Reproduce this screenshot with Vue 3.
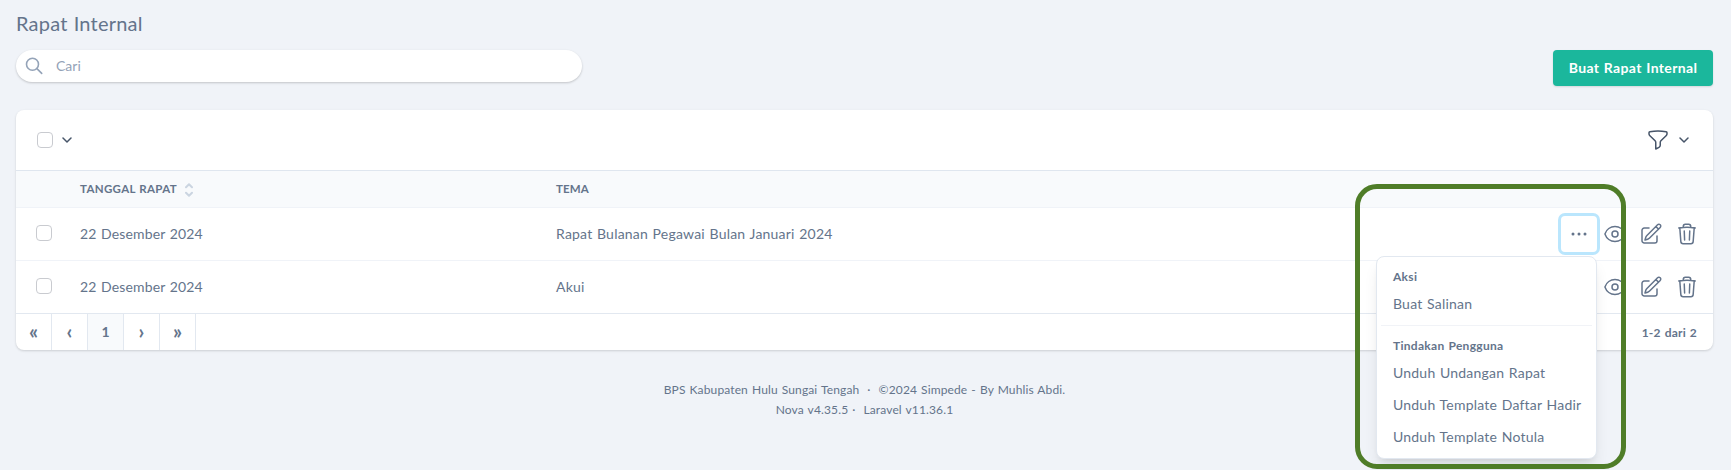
<script setup>
const rows = [
  { id: 1, date: '22 Desember 2024', theme: 'Rapat Bulanan Pegawai Bulan Januari 2024', open: true },
  { id: 2, date: '22 Desember 2024', theme: 'Akui', open: false },
]
const pages = ['«', '‹', '1', '›', '»']
const userActions = ['Unduh Undangan Rapat', 'Unduh Template Daftar Hadir', 'Unduh Template Notula']
</script>

<template>
  <div class="page">
    <h1 class="title">Rapat Internal</h1>

    <div class="topbar">
      <label class="search">
        <svg class="search-icon" width="20" height="20" viewBox="0 0 20 20">
          <circle cx="7.5" cy="8.2" r="6" />
          <path d="M11.9 12.6L16.7 17.4" />
        </svg>
        <span class="placeholder">Cari</span>
      </label>
      <button class="create">Buat Rapat Internal</button>
    </div>

    <section class="card">
      <div class="toolbar">
        <span class="checkbox"></span>
        <svg class="chevron" width="10" height="6" viewBox="0 0 10 6"><path d="M1 1l4 4 4-4" /></svg>
        <svg class="filter" width="24" height="24" viewBox="0 0 24 24">
          <path d="M12 3c2.755 0 5.455.232 8.083.678.533.09.917.556.917 1.096v1.044a2.25 2.25 0 01-.659 1.591l-5.432 5.432a2.25 2.25 0 00-.659 1.591v2.927a2.25 2.25 0 01-1.244 2.013L9.75 21v-6.568a2.25 2.25 0 00-.659-1.591L3.659 7.409A2.25 2.25 0 013 5.818V4.774c0-.54.384-1.006.917-1.096A48.32 48.32 0 0112 3z" />
        </svg>
        <svg class="chevron" width="10" height="6" viewBox="0 0 10 6"><path d="M1 1l4 4 4-4" /></svg>
      </div>

      <div class="row head">
        <span></span>
        <span class="cell sortable">
          <span class="head-date">TANGGAL RAPAT</span>
          <svg width="8" height="14" viewBox="0 0 8 14"><path d="M1 4.2l3-3 3 3M1 9.8l3 3 3-3" /></svg>
        </span>
        <span class="cell">TEMA</span>
      </div>

      <div v-for="row in rows" :key="row.id" class="row">
        <span class="select"><span class="checkbox"></span></span>
        <span class="cell date">{{ row.date }}</span>
        <span class="cell theme">{{ row.theme }}</span>
        <span class="actions">
          <button class="icon-btn" :class="{ focused: row.open }">
            <svg width="24" height="24" viewBox="0 0 24 24" class="dots">
              <circle cx="6" cy="12" r="1.5" /><circle cx="12" cy="12" r="1.5" /><circle cx="18" cy="12" r="1.5" />
            </svg>
          </button>
          <button class="icon-btn">
            <svg width="24" height="24" viewBox="0 0 24 24">
              <path d="M2.036 12.322a1.012 1.012 0 010-.639C3.423 7.51 7.36 4.5 12 4.5c4.638 0 8.573 3.007 9.963 7.178.07.207.07.431 0 .639C20.577 16.49 16.64 19.5 12 19.5c-4.638 0-8.573-3.007-9.963-7.178z" />
              <path d="M15 12a3 3 0 11-6 0 3 3 0 016 0z" />
            </svg>
          </button>
          <button class="icon-btn">
            <svg width="24" height="24" viewBox="0 0 24 24">
              <path d="M16.862 4.487l1.687-1.688a1.875 1.875 0 112.652 2.652L10.582 16.07a4.5 4.5 0 01-1.897 1.13L6 18l.8-2.685a4.5 4.5 0 011.13-1.897l8.932-8.931zm0 0L19.5 7.125M18 14v4.75A2.25 2.25 0 0115.75 21H5.25A2.25 2.25 0 013 18.75V8.25A2.25 2.25 0 015.25 6H10" />
            </svg>
          </button>
          <button class="icon-btn">
            <svg width="24" height="24" viewBox="0 0 24 24">
              <path d="M14.74 9l-.346 9m-4.788 0L9.26 9m9.968-3.21c.342.052.682.107 1.022.166m-1.022-.165L18.16 19.673a2.25 2.25 0 01-2.244 2.077H8.084a2.25 2.25 0 01-2.244-2.077L4.772 5.79m14.456 0a48.108 48.108 0 00-3.478-.397m-12 .562c.34-.059.68-.114 1.022-.165m0 0a48.11 48.11 0 013.478-.397m7.5 0v-.916c0-1.18-.91-2.164-2.09-2.201a51.964 51.964 0 00-3.32 0c-1.18.037-2.09 1.022-2.09 2.201v.916m7.5 0a48.667 48.667 0 00-7.5 0" />
            </svg>
          </button>
        </span>
      </div>

      <div class="pagination">
        <span v-for="p in pages" :key="p" class="page-link" :class="{ current: p === '1' }">{{ p }}</span>
        <span class="count">1-2 dari 2</span>
      </div>
    </section>

    <footer class="footer">
      <div class="line-a">BPS Kabupaten Hulu Sungai Tengah &nbsp;·&nbsp; ©2024 Simpede - By Muhlis Abdi.</div>
      <div class="line-b">Nova v4.35.5 ·&nbsp; Laravel v11.36.1</div>
    </footer>

    <div class="menu">
      <div class="menu-head">Aksi</div>
      <div class="menu-item">Buat Salinan</div>
      <div class="divider"></div>
      <div class="menu-head">Tindakan Pengguna</div>
      <div v-for="a in userActions" :key="a" class="menu-item">{{ a }}</div>
    </div>
    <div class="highlight"></div>
  </div>
</template>

<style>
body {
  background: #f0f3f8;
}
</style>

<style scoped>
.page {
  position: relative;
  box-sizing: border-box;
  width: 100%;
  height: 470px;
  padding: 11px 18px 0 16px;
  overflow: hidden;
  background: #f0f3f8;
  color: #64748b;
  font-family: Lato, "Noto Sans", sans-serif;
  font-size: 14px;
  line-height: 20px;
  letter-spacing: 0.21px;
  word-spacing: 0.8px;
}
.page * {
  box-sizing: border-box;
}
svg {
  display: block;
  flex: none;
  fill: none;
  stroke: currentColor;
  stroke-width: 1.5;
  stroke-linecap: round;
  stroke-linejoin: round;
}
button {
  border: 0;
  padding: 0;
  font: inherit;
  color: inherit;
  background: none;
  letter-spacing: inherit;
  word-spacing: inherit;
}
.title {
  margin: 0;
  height: 39px;
  font-size: 20px;
  line-height: 25px;
  font-weight: 400;
}
.topbar {
  display: flex;
  justify-content: space-between;
  align-items: flex-start;
  height: 60px;
}
.search {
  display: flex;
  align-items: center;
  width: 566px;
  height: 32px;
  padding-left: 9px;
  border-radius: 16px;
  background: #fff;
  box-shadow: 0 1px 3px rgba(0, 0, 0, 0.1), 0 1px 2px rgba(0, 0, 0, 0.1);
  color: #94a3b8;
}
.search-icon {
  stroke-width: 1.6;
}
.placeholder {
  margin-left: 11px;
  letter-spacing: 0;
}
.create {
  width: 160px;
  height: 36px;
  border-radius: 4px;
  background: #1bb79c;
  box-shadow: 0 1px 2px rgba(0, 0, 0, 0.12);
  color: #fff;
  font-weight: 700;
  letter-spacing: 0.35px;
}
.card {
  height: 240px;
  border-radius: 8px;
  background: #fff;
  box-shadow: 0 1px 3px rgba(0, 0, 0, 0.1), 0 1px 2px rgba(0, 0, 0, 0.06);
  overflow: hidden;
}
.toolbar {
  display: flex;
  align-items: center;
  height: 60px;
  padding: 0 24px 0 21px;
  color: #475569;
}
.toolbar .chevron {
  margin-left: 9px;
}
.toolbar .filter {
  margin-left: auto;
}
.checkbox {
  display: block;
  width: 16px;
  height: 16px;
  border: 1px solid #c9cbd0;
  border-radius: 4px;
  background: #fff;
}
.row {
  display: grid;
  grid-template-columns: 56px 476px 1fr auto;
  align-items: center;
  height: 53px;
  border-top: 1px solid #f0f3f8;
}
.head {
  height: 37px;
  border-top-color: #dfe6ef;
  background: #f8fafc;
  font-size: 11.5px;
  font-weight: 700;
  letter-spacing: 0.15px;
}
.head-date {
  letter-spacing: 0.32px;
}
.cell {
  padding-left: 8px;
}
.date {
  letter-spacing: 0.14px;
}
.sortable {
  display: flex;
  align-items: center;
}
.sortable svg {
  margin: 1px 0 0 8px;
  stroke: #cbd5e1;
  stroke-width: 2;
}
.select {
  padding: 0 0 3px 20px;
}
.actions {
  display: flex;
  padding-right: 8px;
}
.icon-btn {
  display: flex;
  align-items: center;
  justify-content: center;
  width: 36px;
  height: 36px;
  border-radius: 4px;
}
.dots {
  fill: currentColor;
  stroke: none;
}
.focused {
  box-shadow: 0 0 0 3px #bae6fd;
}
.pagination {
  display: flex;
  height: 37px;
  border-top: 1px solid #e2e8f0;
  font-weight: 700;
}
.page-link {
  width: 36px;
  border-right: 1px solid #e2e8f0;
  line-height: 35px;
  font-size: 20px;
  letter-spacing: 0;
  text-align: center;
}
.current {
  background: #f8fafc;
  font-size: 14px;
}
.count {
  margin-left: auto;
  padding-right: 16px;
  font-size: 12px;
  line-height: 37px;
}
.footer {
  margin-top: 30px;
  font-size: 12px;
  text-align: center;
  letter-spacing: 0.13px;
}
.menu {
  position: absolute;
  left: 1376px;
  top: 256px;
  width: 221px;
  height: 203px;
  padding: 5px 4px 0;
  border: 1px solid #e2e8f0;
  border-radius: 8px;
  background: #fff;
  box-shadow: 0 10px 15px -3px rgba(0, 0, 0, 0.1), 0 4px 6px -4px rgba(0, 0, 0, 0.1);
}
.menu-head {
  height: 26px;
  padding: 6px 12px 0;
  font-size: 12px;
  font-weight: 700;
  line-height: 18px;
  letter-spacing: 0.29px;
}
.menu-item {
  height: 32px;
  padding: 0 12px;
  line-height: 32px;
  white-space: nowrap;
}
.divider {
  height: 1px;
  margin: 5px 0;
  background: #f1f3f7;
}
.highlight {
  position: absolute;
  left: 1355px;
  top: 184px;
  width: 271px;
  height: 285px;
  border: 5px solid #4f7d28;
  border-radius: 22px;
}
</style>
